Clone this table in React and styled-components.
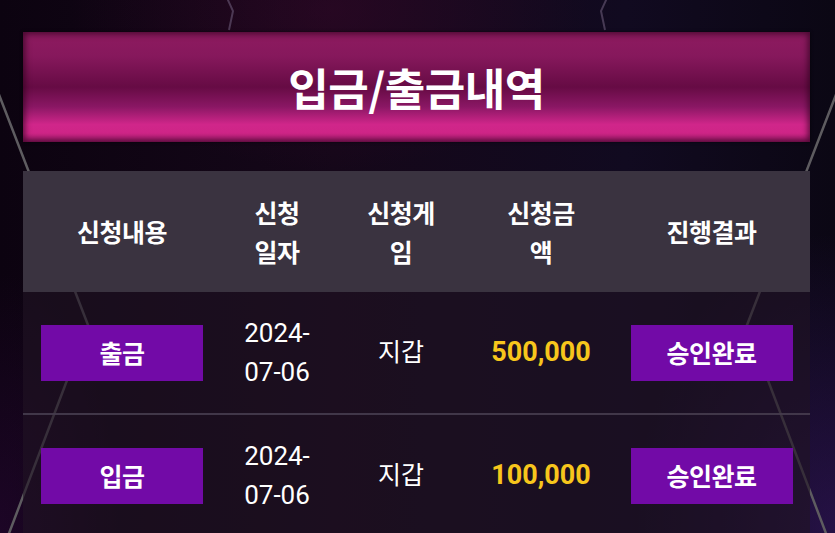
import React from "react";
import styled, { createGlobalStyle } from "styled-components";

const history = [
  { type: "출금", date: ["2024-", "07-06"], game: "지갑", amount: "500,000", status: "승인완료" },
  { type: "입금", date: ["2024-", "07-06"], game: "지갑", amount: "100,000", status: "승인완료" },
];

const columns = [["신청내용"], ["신청", "일자"], ["신청게", "임"], ["신청금", "액"], ["진행결과"]];

export default function App() {
  return (
    <>
      <GlobalStyle />
      <Page>
        <Decor viewBox="0 0 835 533" preserveAspectRatio="none">
          <g stroke="#5e5c60" strokeWidth="2.5" fill="none">
            <polyline points="-2,92 88,325 8,536" />
            <polyline points="837,92 747,325 827,536" />
          </g>
          <g stroke="#6a5a78" strokeWidth="2" fill="none" opacity="0.6">
            <polyline points="227,-2 233,11 229,30" />
            <polyline points="607,-2 601,11 605,30" />
          </g>
        </Decor>

        <Content>
          <Banner>
            <BannerTitle>입금/출금내역</BannerTitle>
          </Banner>

          <Table>
            <HeaderRow>
              {columns.map((lines, i) => (
                <HeadCell key={i}>
                  {lines.map((l, j) => (
                    <span key={j}>{l}</span>
                  ))}
                </HeadCell>
              ))}
            </HeaderRow>

            {history.map((row, i) => (
              <Row key={i} $divider={i > 0}>
                <Cell>
                  <Badge>{row.type}</Badge>
                </Cell>
                <Cell>
                  {row.date.map((d, j) => (
                    <span key={j}>{d}</span>
                  ))}
                </Cell>
                <Cell $korean>{row.game}</Cell>
                <Cell $amount>{row.amount}</Cell>
                <Cell>
                  <Badge>{row.status}</Badge>
                </Cell>
              </Row>
            ))}
          </Table>
        </Content>
      </Page>
    </>
  );
}

const GlobalStyle = createGlobalStyle`
  html, body {
    margin: 0;
    padding: 0;
    background: #0d0412;
  }
  body {
    font-family: Roboto, "Noto Sans CJK KR", sans-serif;
    color: #fff;
  }
`;

const Page = styled.div`
  position: relative;
  width: 835px;
  height: 533px;
  overflow: hidden;
  background:
    radial-gradient(ellipse 260px 160px at 330px 10px, rgba(60, 8, 45, 0.45), transparent),
    radial-gradient(ellipse 200px 300px at 835px 533px, rgba(70, 30, 130, 0.45), transparent),
    radial-gradient(ellipse 120px 260px at 0px 533px, rgba(60, 10, 80, 0.35), transparent),
    linear-gradient(90deg, #0c0310 0%, #150719 40%, #110a20 75%, #0b0714 100%);
`;

const Decor = styled.svg`
  position: absolute;
  inset: 0;
  width: 100%;
  height: 100%;
  z-index: 0;
`;

const Content = styled.div`
  position: relative;
  z-index: 1;
  padding: 32px 25px 0 23px;
  display: flex;
  flex-direction: column;
  gap: 29px;
`;

const Banner = styled.div`
  height: 110px;
  display: flex;
  align-items: center;
  justify-content: center;
  background: linear-gradient(
    180deg,
    #8e1b60 0%,
    #86185c 22%,
    #660b44 50%,
    #8a1764 68%,
    #d0268a 84%,
    #cf2587 92%,
    #a41a6e 100%
  );
  box-shadow: inset 0 0 6px 2px rgba(40, 0, 25, 0.7), 0 0 3px rgba(0, 0, 0, 0.6);
`;

const BannerTitle = styled.h1`
  margin: 0;
  font-family: "Noto Sans CJK KR", sans-serif;
  font-size: 44px;
  font-weight: 700;
  letter-spacing: -0.5px;
  color: #fff;
`;

const Table = styled.div`
  display: flex;
  flex-direction: column;
`;

const grid = `
  display: grid;
  grid-template-columns: 198px 112px 136px 144px 197px;
`;

const HeaderRow = styled.div`
  ${grid};
  height: 121px;
  background: #3a3340;
`;

const HeadCell = styled.div`
  display: flex;
  flex-direction: column;
  align-items: center;
  justify-content: center;
  font-family: "Noto Sans CJK KR", sans-serif;
  font-size: 25px;
  font-weight: 700;
  line-height: 39px;
  letter-spacing: -0.5px;
`;

const Row = styled.div`
  ${grid};
  height: 121px;
  background: rgba(32, 20, 36, 0.62);
  border-top: ${({ $divider }) => ($divider ? "2px solid rgba(70, 60, 78, 0.9)" : "none")};
`;

const Cell = styled.div`
  display: flex;
  flex-direction: column;
  align-items: center;
  justify-content: center;
  font-size: ${({ $amount, $korean }) => ($amount ? "27px" : $korean ? "25px" : "26px")};
  line-height: 39px;
  font-weight: ${({ $amount }) => ($amount ? 700 : 400)};
  color: ${({ $amount }) => ($amount ? "#f7c61c" : "#fff")};
`;

const Badge = styled.div`
  width: 162px;
  height: 56px;
  display: flex;
  align-items: center;
  justify-content: center;
  background: #720aa7;
  font-family: "Noto Sans CJK KR", sans-serif;
  font-size: 25px;
  font-weight: 700;
  letter-spacing: -0.5px;
  color: #fff;
`;
